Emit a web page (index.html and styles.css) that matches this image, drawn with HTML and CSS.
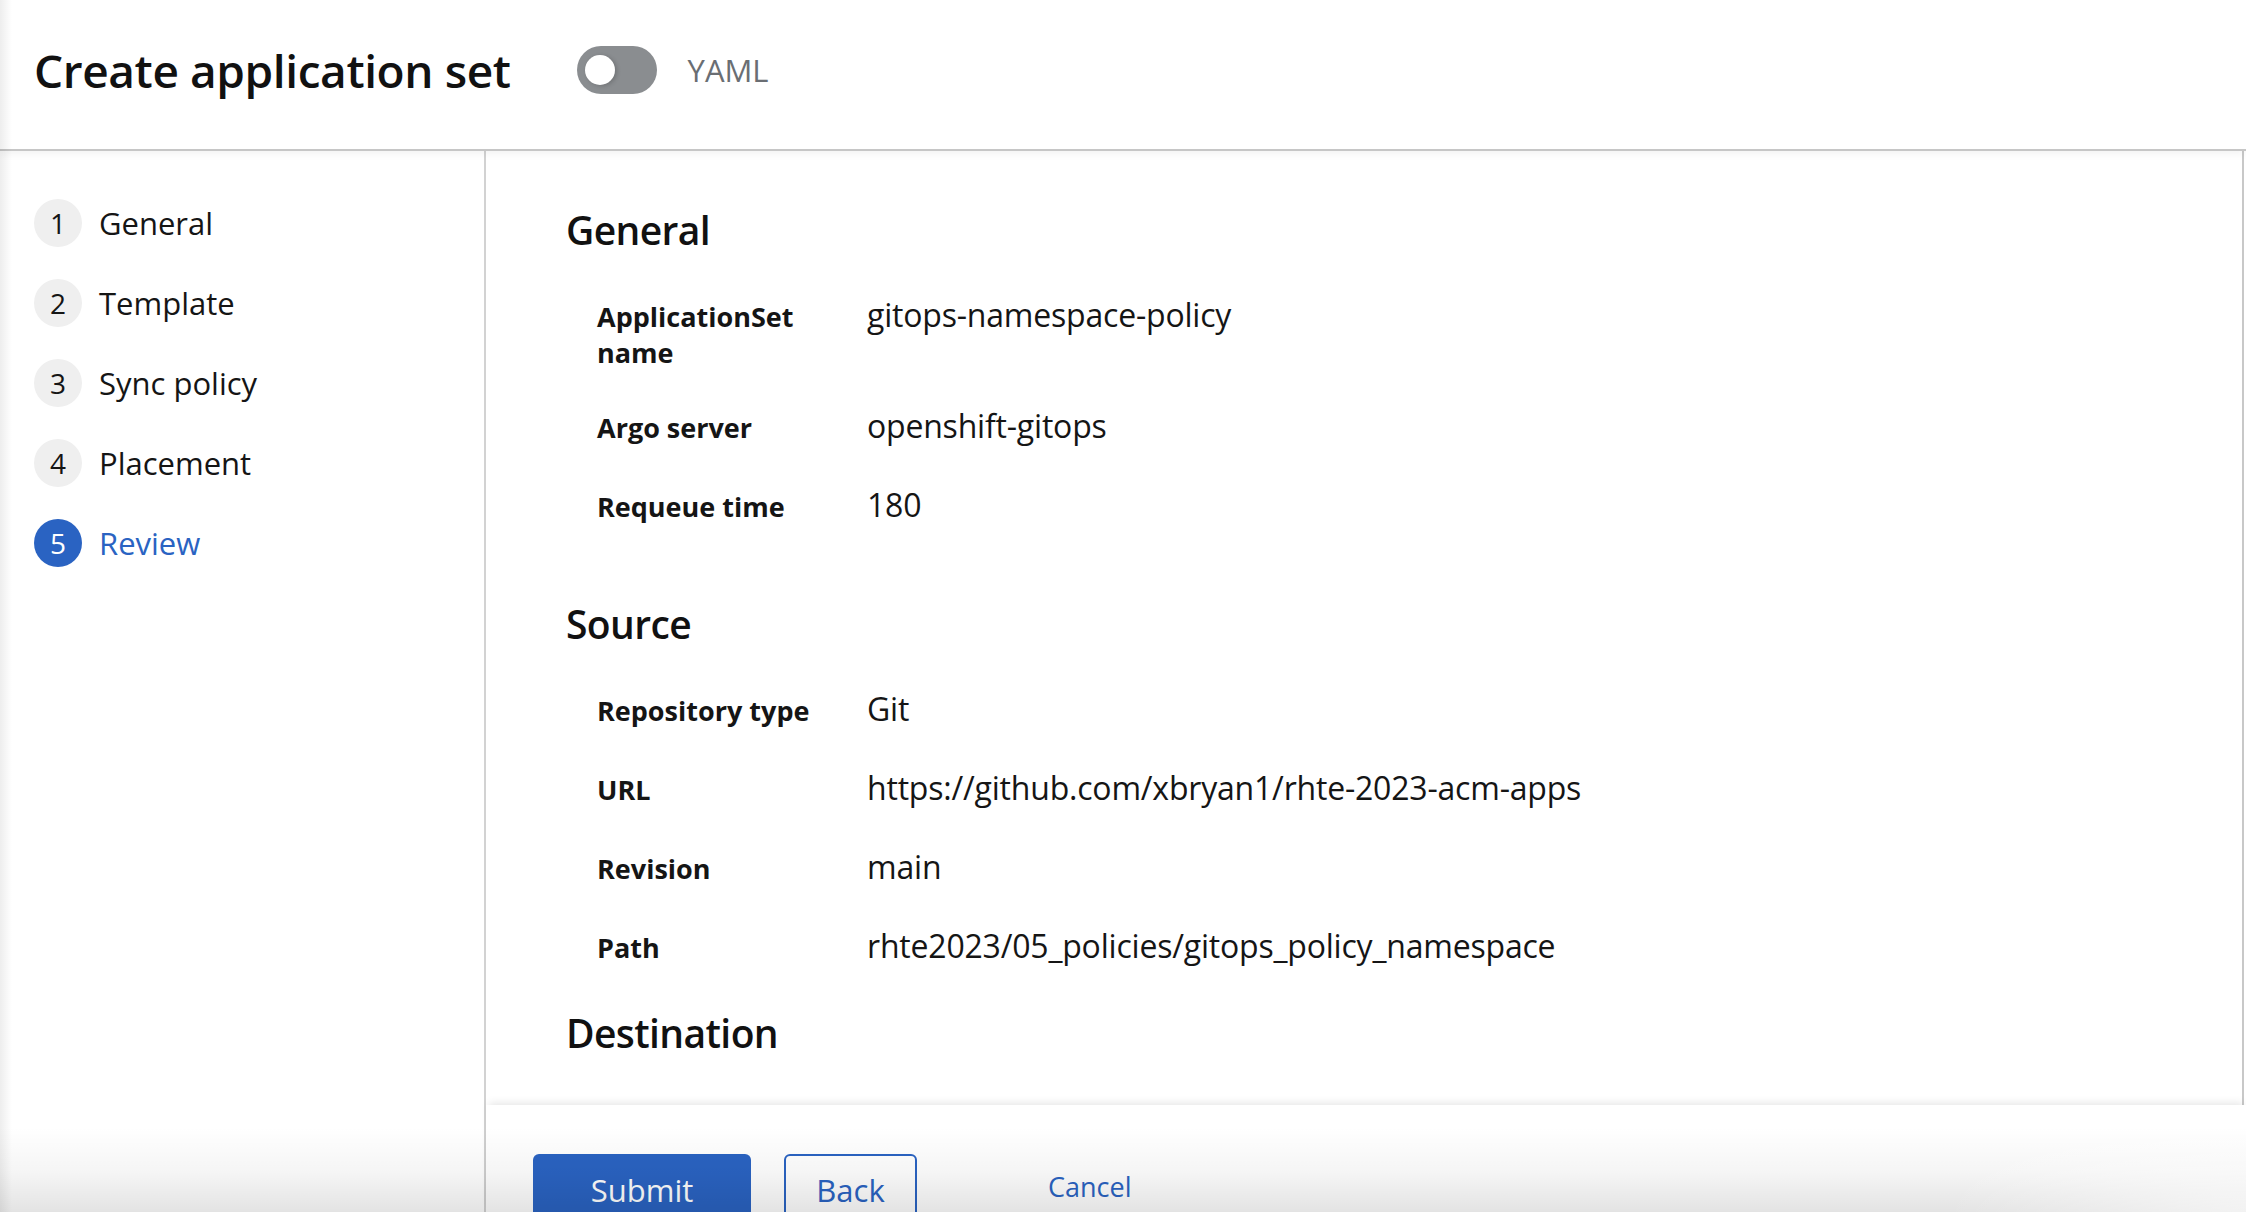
FILE: index.html
```html
<!DOCTYPE html>
<html lang="en">
<head>
<meta charset="utf-8">
<title>Create application set</title>
<link rel="stylesheet" href="styles.css">
</head>
<body>
<div class="app">
  <header class="page-header">
    <h1 class="page-title">Create application set</h1>
    <label class="switch">
      <span class="switch-toggle"></span>
      <span class="switch-label">YAML</span>
    </label>
  </header>
  <div class="wizard">
    <nav class="wizard-nav">
      <ol class="steps">
        <li class="step"><span class="step-num">1</span><span class="step-text">General</span></li>
        <li class="step"><span class="step-num">2</span><span class="step-text">Template</span></li>
        <li class="step"><span class="step-num">3</span><span class="step-text">Sync policy</span></li>
        <li class="step"><span class="step-num">4</span><span class="step-text">Placement</span></li>
        <li class="step is-current"><span class="step-num">5</span><span class="step-text">Review</span></li>
      </ol>
    </nav>
    <div class="wizard-main">
      <div class="wizard-body">
        <section class="review-section">
          <h2 class="section-title">General</h2>
          <dl class="desc">
            <div class="desc-row"><dt>ApplicationSet name</dt><dd>gitops-namespace-policy</dd></div>
            <div class="desc-row"><dt>Argo server</dt><dd>openshift-gitops</dd></div>
            <div class="desc-row"><dt>Requeue time</dt><dd>180</dd></div>
          </dl>
        </section>
        <section class="review-section review-section--wide">
          <h2 class="section-title">Source</h2>
          <dl class="desc">
            <div class="desc-row"><dt>Repository type</dt><dd>Git</dd></div>
            <div class="desc-row"><dt>URL</dt><dd>https://github.com/xbryan1/rhte-2023-acm-apps</dd></div>
            <div class="desc-row"><dt>Revision</dt><dd>main</dd></div>
            <div class="desc-row"><dt>Path</dt><dd>rhte2023/05_policies/gitops_policy_namespace</dd></div>
          </dl>
        </section>
        <section class="review-section">
          <h2 class="section-title">Destination</h2>
        </section>
      </div>
      <footer class="wizard-footer">
        <button class="btn btn-primary" type="button">Submit</button>
        <button class="btn btn-secondary" type="button">Back</button>
        <button class="btn btn-link" type="button">Cancel</button>
      </footer>
    </div>
  </div>
  <div class="vignette"></div>
</div>
</body>
</html>
```
FILE: styles.css
```css
* { box-sizing: border-box; }

html, body {
  margin: 0;
  height: 100%;
}

body {
  font-family: "Open Sans", "Liberation Sans", sans-serif;
  color: #151515;
  background: #fff;
  overflow: hidden;
}

.app {
  height: 1212px;
  display: flex;
  flex-direction: column;
  position: relative;
  background: #fff;
}

/* Header */
.page-header {
  height: 151px;
  flex: none;
  display: flex;
  align-items: flex-start;
  padding: 40px 0 0 34px;
  border-bottom: 2px solid #c6c6c6;
  box-shadow: 0 3px 8px rgba(0, 0, 0, 0.05);
  position: relative;
  z-index: 2;
  background: #fff;
}

.page-title {
  margin: 0;
  font-size: 46px;
  font-weight: 600;
  line-height: 60px;
  letter-spacing: -0.4px;
  color: #111;
}

.switch {
  margin: 6px 0 0 66px;
  display: flex;
  align-items: center;
  gap: 31px;
}

.switch-toggle {
  width: 80px;
  height: 48px;
  border-radius: 24px;
  background: #8a8d90;
  position: relative;
}

.switch-toggle::before {
  content: "";
  position: absolute;
  left: 8px;
  top: 9px;
  width: 30px;
  height: 30px;
  border-radius: 50%;
  background: #fff;
  box-shadow: 2px 1px 4px rgba(0, 0, 0, 0.18);
}

.switch-label {
  font-size: 31px;
  line-height: 48px;
  color: #6a6e73;
}

/* Wizard */
.wizard {
  flex: 1;
  display: flex;
  min-height: 0;
}

.wizard-nav {
  width: 486px;
  flex: none;
  border-right: 2px solid #d2d2d2;
  padding: 48px 0 0 34px;
}

.steps {
  list-style: none;
  margin: 0;
  padding: 0;
  display: flex;
  flex-direction: column;
  gap: 32px;
}

.step {
  display: flex;
  align-items: center;
  gap: 17px;
  height: 48px;
  font-size: 31px;
}

.step-num {
  width: 48px;
  height: 48px;
  flex: none;
  border-radius: 50%;
  background: #efefef;
  display: flex;
  align-items: center;
  justify-content: center;
  font-size: 28px;
}

.step.is-current .step-num {
  background: #2a63c2;
  color: #fff;
}

.step.is-current .step-text {
  color: #2a63c2;
}

.wizard-main {
  flex: 1;
  display: flex;
  flex-direction: column;
  min-width: 0;
}

.wizard-body {
  flex: 1;
  min-height: 0;
  overflow: hidden;
  padding: 53px 0 0 80px;
  border-right: 2px solid #c8c8c8;
  margin-right: 2px;
}

.review-section + .review-section {
  margin-top: 37px;
}

.review-section + .review-section--wide {
  margin-top: 69px;
}

.section-title {
  margin: 0 0 35px;
  font-size: 39px;
  font-weight: 600;
  line-height: 52px;
  letter-spacing: -0.6px;
  color: #111;
}

.desc {
  margin: 0 0 0 31px;
  display: flex;
  flex-direction: column;
  gap: 31px;
}

.desc-row {
  display: grid;
  grid-template-columns: 240px 1fr;
  column-gap: 30px;
  align-items: baseline;
}

.desc-row dt {
  font-weight: 700;
  font-size: 27px;
  line-height: 36px;
}

.desc-row dd {
  margin: 0;
  font-size: 32px;
  line-height: 48px;
  letter-spacing: -0.2px;
}

/* Footer */
.wizard-footer {
  height: 107px;
  flex: none;
  display: flex;
  align-items: flex-start;
  gap: 33px;
  padding: 49px 0 0 47px;
  background: #fff;
  position: relative;
  z-index: 1;
  box-shadow: 0 -5px 8px -3px rgba(0, 0, 0, 0.10);
}

.btn {
  height: 72px;
  padding: 10px 0;
  line-height: 48px;
  font-family: inherit;
  font-size: 31px;
  border-radius: 6px;
  border: 2px solid transparent;
  display: inline-flex;
  justify-content: center;
  cursor: pointer;
}

.btn-primary {
  width: 218px;
  background: #2a63c2;
  color: #fff;
}

.btn-secondary {
  width: 133px;
  background: #fff;
  color: #2a63c2;
  border-color: #2a63c2;
}

.btn-link {
  padding: 7px 32px;
  margin-left: 64px;
  font-size: 27px;
  background: none;
  color: #2a63c2;
}

/* Photo vignette over the whole capture */
.vignette {
  position: absolute;
  inset: 0;
  pointer-events: none;
  z-index: 5;
  background:
    radial-gradient(ellipse 300px 110px at 100% 100%, rgba(255, 255, 255, 0.55), rgba(255, 255, 255, 0) 100%),
    linear-gradient(to top, rgba(0, 0, 0, 0.11), rgba(0, 0, 0, 0.04) 40px, rgba(0, 0, 0, 0) 85px),
    linear-gradient(to right, rgba(0, 0, 0, 0.07), rgba(0, 0, 0, 0) 12px);
}
```
